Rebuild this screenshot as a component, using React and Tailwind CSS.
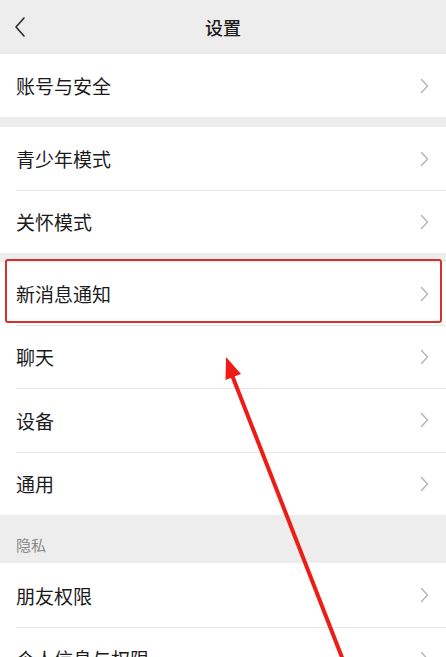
import React from "react";

const font = { fontFamily: '"Noto Sans CJK SC", "Noto Sans", sans-serif' };

function Chevron() {
  return (
    <svg width="9" height="16" viewBox="0 0 9 16" className="shrink-0">
      <path d="M1.5 1.5 L7.5 8 L1.5 14.5" fill="none" stroke="#b4b4b4" strokeWidth="1.4" strokeLinecap="round" strokeLinejoin="round" />
    </svg>
  );
}

function Row({ label, first, h = "h-[63px]" }) {
  return (
    <div className={`relative ${h} bg-white flex items-center pl-4 pr-[17px]`}>
      {!first && <div className="absolute top-0 left-4 right-0 h-px bg-[#e8e8e8]" />}
      <span className="flex-1 text-[19px] leading-none text-[#1b1b1b]">{label}</span>
      <Chevron />
    </div>
  );
}

export default function App() {
  return (
    <div className="relative w-[446px] h-[657px] overflow-hidden bg-[#ededed]" style={font}>
      <div className="h-[54px] flex items-center justify-center relative">
        <svg width="14" height="22" viewBox="0 0 14 22" className="absolute left-[13px] top-[16px]">
          <path d="M11 2 L3 11 L11 20" fill="none" stroke="#2a2a2a" strokeWidth="1.6" strokeLinecap="round" strokeLinejoin="round" />
        </svg>
        <span className="text-[18px] font-medium text-[#1b1b1b] leading-none">设置</span>
      </div>
      <div className="flex flex-col">
        <Row label="账号与安全" first />
        <div className="h-[10px]" />
        <Row label="青少年模式" first />
        <Row label="关怀模式" />
        <div className="h-[9px]" />
        <Row label="新消息通知" first />
        <Row label="聊天" />
        <Row label="设备" h="h-[64px]" />
        <Row label="通用" />
        <div className="h-[48px] flex items-center pl-4">
          <span className="text-[15px] leading-none text-[#8a8a8a] mt-[10px]">隐私</span>
        </div>
        <Row label="朋友权限" first h="h-[64px]" />
        <Row label="个人信息与权限" />
      </div>

      <div className="absolute left-[5px] top-[259px] w-[437px] h-[64px] border-2 border-[#d8302a] rounded-[3px]" />

      <svg className="absolute left-0 top-0" width="446" height="657" viewBox="0 0 446 657">
        <line x1="230" y1="370" x2="343" y2="660" stroke="#ee1c16" strokeWidth="4" />
        <polygon points="226,357 241,374 225.5,380" fill="#ee1c16" />
      </svg>
    </div>
  );
}
